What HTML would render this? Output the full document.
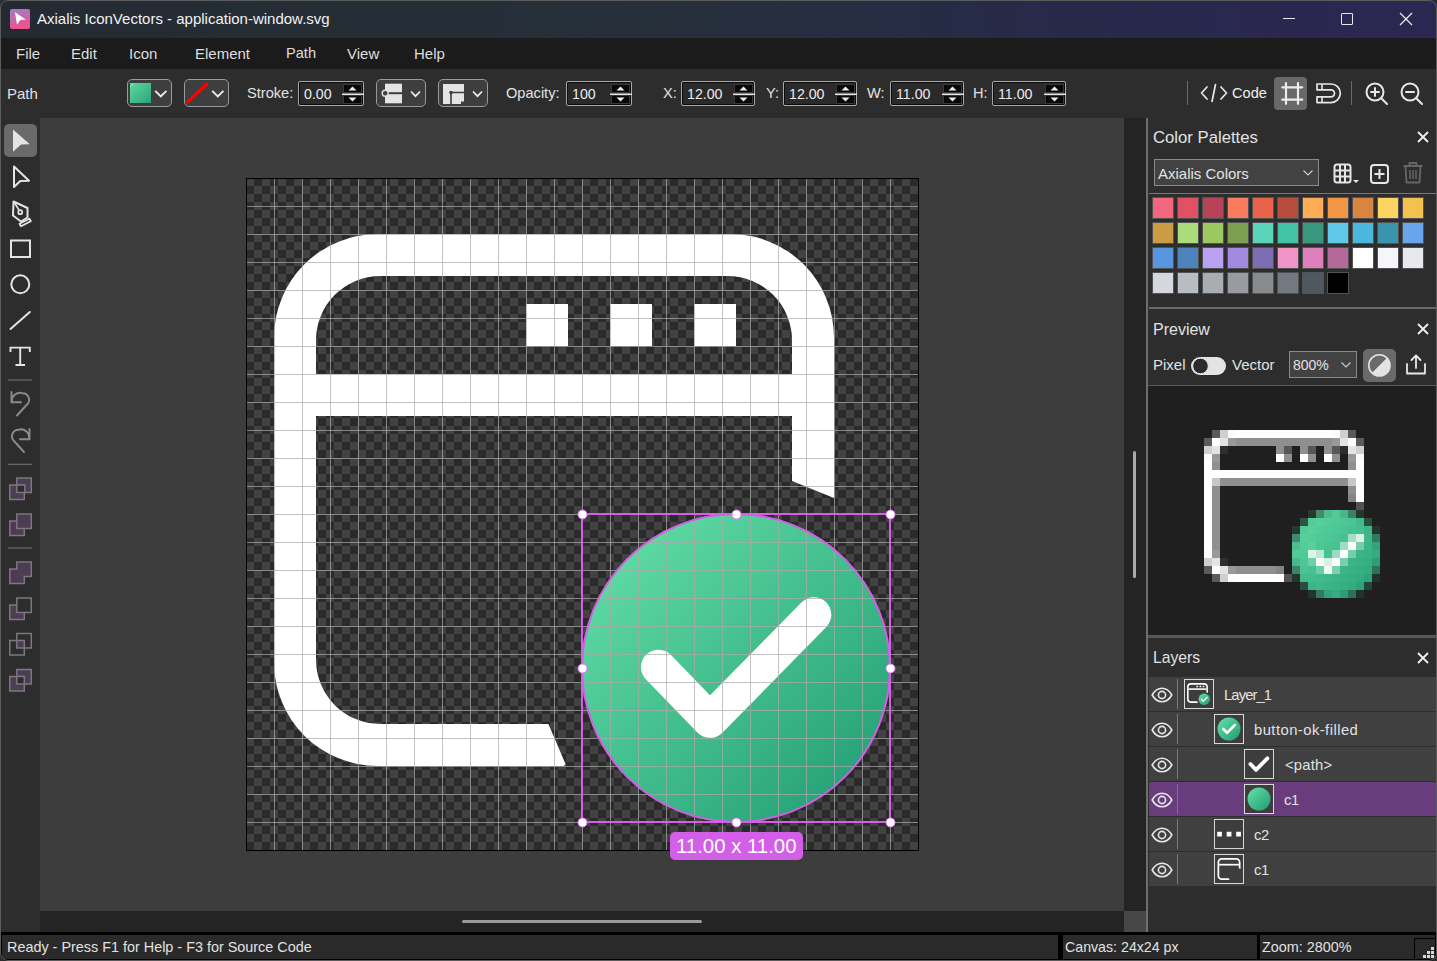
<!DOCTYPE html>
<html><head><meta charset="utf-8">
<style>
*{box-sizing:border-box;margin:0;padding:0}
html,body{width:1437px;height:961px;overflow:hidden;background:#2d2d2d;font-family:"Liberation Sans",sans-serif;color:#e6e6e6;position:relative}
.a{position:absolute}
#frame{position:absolute;left:0;top:0;width:1437px;height:961px;border:1px solid #5c5c5c;border-radius:8px;box-shadow:0 0 0 30px #2e2e2e;z-index:100;pointer-events:none}
#title{left:0;top:0;width:1437px;height:38px;background:linear-gradient(90deg,#242a31 0%,#26303a 45%,#262c44 63%,#28284c 80%,#2b2752 100%)}
#menu{left:0;top:38px;width:1437px;height:31px;background:#1b1b1b}
#menu span{position:absolute;top:7px;font-size:15px;color:#dedede}
#tb{left:0;top:69px;width:1437px;height:49px;background:#2d2d2d}
.lbl{position:absolute;font-size:15px;color:#e2e2e2}
#tools{left:0;top:118px;width:40px;height:814px;background:#2d2d2d}
#cvarea{left:40px;top:118px;width:1084px;height:793px;background:#3d3d3d}
#vsb{left:1124px;top:118px;width:22px;height:793px;background:#242424}
#hsb{left:40px;top:911px;width:1084px;height:21px;background:#242424}
#corner{left:1124px;top:911px;width:22px;height:21px;background:#474747}
#split{left:1146px;top:118px;width:2px;height:814px;background:#6e6e6e}
#panel{left:1148px;top:118px;width:289px;height:814px;background:#2d2d2d}

.btn{position:absolute;border:1px solid #9a9a9a;border-radius:5px;background:#3e3e3e}
.chev{position:absolute}
.inp{position:absolute;height:25px;border:1px solid #a8a8a8;border-radius:2px;background:#2a2a2a;box-shadow:inset 0 0 0 1px #0c0c0c}
.inp span{position:absolute;left:5px;top:4px;font-size:14.2px;color:#ececec}
.spin{position:absolute;right:-1px;top:1px;width:22px;height:21px}
#status{left:0;top:932px;width:1437px;height:29px;background:#000}
</style></head><body>
<div id="title" class="a">
<svg class="a" style="left:10px;top:9px" width="20" height="20" viewBox="0 0 20 20"><defs><linearGradient id="ic" x1="0" y1="0" x2="0.3" y2="1"><stop offset="0" stop-color="#9a82c8"/><stop offset="1" stop-color="#f0508c"/></linearGradient></defs><rect x="0" y="0" width="20" height="20" rx="2" fill="url(#ic)"/><path d="M5 3.2 L15.8 10.6 L10.2 11 L7 15.8 Z" fill="#fff"/></svg>
<span class="lbl" style="left:37px;top:10px;color:#f2f2f2">Axialis IconVectors - application-window.svg</span>
<div class="a" style="left:1283px;top:18px;width:12px;height:1px;background:#e8e8e8"></div>
<div class="a" style="left:1341px;top:13px;width:12px;height:12px;border:1px solid #e8e8e8;border-radius:1px"></div>
<svg class="a" style="left:1399px;top:12px" width="14" height="14" viewBox="0 0 14 14"><path d="M1 1L13 13M13 1L1 13" stroke="#eee" stroke-width="1.2"/></svg>
</div>
<div id="menu" class="a">
<span style="left:16px">File</span><span style="left:71px">Edit</span><span style="left:129px">Icon</span><span style="left:195px">Element</span><span style="left:286px;font-size:14.6px">Path</span><span style="left:347px">View</span><span style="left:414px">Help</span>
</div>
<div id="tb" class="a"><span class="lbl" style="left:7px;top:16px">Path</span><div class="btn" style="left:127px;top:10px;width:45px;height:28px"></div><svg class="a" style="left:130px;top:14px" width="21" height="20" viewBox="0 0 21 20"><defs><linearGradient id="sw" x1="0" y1="0" x2="1" y2="1"><stop offset="0" stop-color="#5fd9a2"/><stop offset="1" stop-color="#2aa27b"/></linearGradient></defs><rect width="21" height="20" fill="url(#sw)"/><path d="M0 4L4 0" stroke="#8fe8c0" stroke-width="0.8"/></svg><svg class="a" style="left:154px;top:20px" width="14" height="10" viewBox="0 0 14 10"><path d="M1.2 1.8L6.8 7.4L12.4 1.8" fill="none" stroke="#ececec" stroke-width="1.9"/></svg><div class="btn" style="left:184px;top:10px;width:45px;height:28px"></div><svg class="a" style="left:186px;top:13px" width="22" height="22" viewBox="0 0 22 22"><path d="M2 19.8L20.6 2.3" stroke="#ff0000" stroke-width="3.4" stroke-linecap="round"/></svg><svg class="a" style="left:211px;top:20px" width="14" height="10" viewBox="0 0 14 10"><path d="M1.2 1.8L6.8 7.4L12.4 1.8" fill="none" stroke="#ececec" stroke-width="1.9"/></svg><span class="lbl" style="left:247px;top:16px;font-size:14.6px">Stroke:</span></div><div class="inp" style="left:298px;top:81px;width:66px"><span>0.00</span><svg class="spin" width="22" height="21" viewBox="0 0 22 21"><rect x="1.5" y="1.5" width="18" height="8" fill="#080808" stroke="#383838"/><rect x="1.5" y="12.5" width="18" height="8" fill="#080808" stroke="#383838"/><rect x="0" y="10.5" width="22" height="1.5" fill="#e6e6e6"/><path d="M6.5 7.5L10.5 3.5L14.5 7.5Z" fill="#eee"/><path d="M6.5 14.5L10.5 18.5L14.5 14.5Z" fill="#eee"/></svg></div><div class="btn" style="left:376px;top:79px;width:50px;height:28px"></div><svg class="a" style="left:381px;top:83px" width="24" height="21" viewBox="0 0 24 21"><rect x="4" y="0.7" width="17" height="19.6" fill="#e4e4e4"/><rect x="4" y="9.2" width="17" height="2" fill="#3e3e3e"/><circle cx="4.2" cy="10.2" r="3" fill="#3e3e3e" stroke="#e4e4e4" stroke-width="1.4"/></svg><svg class="a" style="left:410px;top:90px" width="12" height="9" viewBox="0 0 12 9"><path d="M1 1.5L5.5 6.2L10 1.5" fill="none" stroke="#ececec" stroke-width="1.7"/></svg><div class="btn" style="left:438px;top:79px;width:50px;height:28px"></div><svg class="a" style="left:443px;top:83px" width="22" height="22" viewBox="0 0 22 22"><path d="M0 1H21V21H0Z" fill="#e4e4e4"/><path d="M18 22H22V18.5H18Z" fill="#3e3e3e"/><path d="M8 9.5H21M8 9.5V22" stroke="#3e3e3e" stroke-width="1.6"/><circle cx="8" cy="9.5" r="1.8" fill="#3e3e3e"/></svg><svg class="a" style="left:472px;top:90px" width="12" height="9" viewBox="0 0 12 9"><path d="M1 1.5L5.5 6.2L10 1.5" fill="none" stroke="#ececec" stroke-width="1.7"/></svg><span class="lbl" style="left:506px;top:85px;font-size:14.6px">Opacity:</span><div class="inp" style="left:566px;top:81px;width:66px"><span>100</span><svg class="spin" width="22" height="21" viewBox="0 0 22 21"><rect x="1.5" y="1.5" width="18" height="8" fill="#080808" stroke="#383838"/><rect x="1.5" y="12.5" width="18" height="8" fill="#080808" stroke="#383838"/><rect x="0" y="10.5" width="22" height="1.5" fill="#e6e6e6"/><path d="M6.5 7.5L10.5 3.5L14.5 7.5Z" fill="#eee"/><path d="M6.5 14.5L10.5 18.5L14.5 14.5Z" fill="#eee"/></svg></div><span class="lbl" style="left:663px;top:85px;font-size:14.6px">X:</span><div class="inp" style="left:681px;top:81px;width:74px"><span>12.00</span><svg class="spin" width="22" height="21" viewBox="0 0 22 21"><rect x="1.5" y="1.5" width="18" height="8" fill="#080808" stroke="#383838"/><rect x="1.5" y="12.5" width="18" height="8" fill="#080808" stroke="#383838"/><rect x="0" y="10.5" width="22" height="1.5" fill="#e6e6e6"/><path d="M6.5 7.5L10.5 3.5L14.5 7.5Z" fill="#eee"/><path d="M6.5 14.5L10.5 18.5L14.5 14.5Z" fill="#eee"/></svg></div><span class="lbl" style="left:766px;top:85px;font-size:14.6px">Y:</span><div class="inp" style="left:783px;top:81px;width:74px"><span>12.00</span><svg class="spin" width="22" height="21" viewBox="0 0 22 21"><rect x="1.5" y="1.5" width="18" height="8" fill="#080808" stroke="#383838"/><rect x="1.5" y="12.5" width="18" height="8" fill="#080808" stroke="#383838"/><rect x="0" y="10.5" width="22" height="1.5" fill="#e6e6e6"/><path d="M6.5 7.5L10.5 3.5L14.5 7.5Z" fill="#eee"/><path d="M6.5 14.5L10.5 18.5L14.5 14.5Z" fill="#eee"/></svg></div><span class="lbl" style="left:867px;top:85px;font-size:14.6px">W:</span><div class="inp" style="left:890px;top:81px;width:74px"><span>11.00</span><svg class="spin" width="22" height="21" viewBox="0 0 22 21"><rect x="1.5" y="1.5" width="18" height="8" fill="#080808" stroke="#383838"/><rect x="1.5" y="12.5" width="18" height="8" fill="#080808" stroke="#383838"/><rect x="0" y="10.5" width="22" height="1.5" fill="#e6e6e6"/><path d="M6.5 7.5L10.5 3.5L14.5 7.5Z" fill="#eee"/><path d="M6.5 14.5L10.5 18.5L14.5 14.5Z" fill="#eee"/></svg></div><span class="lbl" style="left:973px;top:85px;font-size:14.6px">H:</span><div class="inp" style="left:992px;top:81px;width:74px"><span>11.00</span><svg class="spin" width="22" height="21" viewBox="0 0 22 21"><rect x="1.5" y="1.5" width="18" height="8" fill="#080808" stroke="#383838"/><rect x="1.5" y="12.5" width="18" height="8" fill="#080808" stroke="#383838"/><rect x="0" y="10.5" width="22" height="1.5" fill="#e6e6e6"/><path d="M6.5 7.5L10.5 3.5L14.5 7.5Z" fill="#eee"/><path d="M6.5 14.5L10.5 18.5L14.5 14.5Z" fill="#eee"/></svg></div><div class="a" style="left:1187px;top:81px;width:1px;height:24px;background:#6a6a6a"></div><svg class="a" style="left:1200px;top:82px" width="28" height="22" viewBox="0 0 28 22"><path d="M7 5L1.5 11L7 17M21 5L26.5 11L21 17M15.5 2.5L12 19.5" fill="none" stroke="#e8e8e8" stroke-width="1.7" stroke-linecap="round" stroke-linejoin="round"/></svg><span class="lbl" style="left:1232px;top:85px;color:#f0f0f0;font-size:14.6px">Code</span><div class="a" style="left:1274px;top:77px;width:33px;height:33px;background:#686868;border-radius:4px"></div><svg class="a" style="left:1280px;top:82px" width="24" height="24" viewBox="0 0 24 24"><path d="M6 1.2V21.8M18 1.2V21.8M2.3 5.3H22.2M2.3 17.7H22.2" fill="none" stroke="#ececec" stroke-width="2.2" stroke-linecap="round"/></svg><svg class="a" style="left:1314px;top:81px" width="28" height="25" viewBox="0 0 28 25"><path d="M3 3H17A9.3 9.3 0 0 1 17 21.6H3V15.8H17A3.5 3.5 0 0 0 17 8.8H3Z" fill="none" stroke="#e8e8e8" stroke-width="1.7" stroke-linejoin="round"/><path d="M8 3V8.8M8 15.8V21.6" stroke="#e8e8e8" stroke-width="1.6"/></svg><div class="a" style="left:1351px;top:81px;width:1px;height:24px;background:#6a6a6a"></div><svg class="a" style="left:1364px;top:81px" width="26" height="26" viewBox="0 0 26 26"><circle cx="11" cy="11" r="8.5" fill="none" stroke="#e8e8e8" stroke-width="2"/><path d="M17.5 17.5L23 23M7 11H15M11 7V15" stroke="#e8e8e8" stroke-width="2" stroke-linecap="round"/></svg><svg class="a" style="left:1399px;top:81px" width="26" height="26" viewBox="0 0 26 26"><circle cx="11" cy="11" r="8.5" fill="none" stroke="#e8e8e8" stroke-width="2"/><path d="M17.5 17.5L23 23M7 11H15" stroke="#e8e8e8" stroke-width="2" stroke-linecap="round"/></svg>
<div id="tools" class="a"></div>
<svg class="a" style="left:0;top:0;z-index:5" width="40" height="961" viewBox="0 0 40 961"><rect x="4" y="124" width="33" height="33" rx="5" fill="#6a6a6a"/><path d="M13 129.5L29.8 144.3L21 144.6L13 151.8Z" fill="#e4e4e4"/><path d="M14 166.5L29 180.8L20.3 181L14 187Z" fill="none" stroke="#e4e4e4" stroke-width="2" stroke-linejoin="round"/><path d="M13.5 201.5L27.5 208L27.5 217.5L21 221.5L13 215.5Z" fill="none" stroke="#e4e4e4" stroke-width="2" stroke-linejoin="round"/><path d="M14 202L19.6 211" stroke="#e4e4e4" stroke-width="1.6"/><circle cx="20.2" cy="212.2" r="2" fill="none" stroke="#e4e4e4" stroke-width="1.7"/><path d="M19.5 223.8L29.5 218.8L30.8 221.2L21 226.2Z" fill="none" stroke="#e4e4e4" stroke-width="1.8" stroke-linejoin="round"/><rect x="11" y="240.5" width="19" height="16.5" fill="none" stroke="#e4e4e4" stroke-width="2"/><circle cx="20.3" cy="284.3" r="9" fill="none" stroke="#e4e4e4" stroke-width="2"/><path d="M10.5 329L29.8 312" stroke="#e4e4e4" stroke-width="2" stroke-linecap="round"/><path d="M10.5 352V347.6H29.8V352M20.2 347.6V365M15.5 365H25" fill="none" stroke="#e4e4e4" stroke-width="1.9"/><rect x="8" y="379.5" width="24" height="1" fill="#777"/><path d="M17 415.5L27 404.5A6.5 6.5 0 0 0 22.5 393.2A8 8 0 0 0 12 401.5M11.5 392V402.3H21" fill="none" stroke="#8c8c8c" stroke-width="1.9" stroke-linecap="round" stroke-linejoin="round"/><path d="M24 452L14 441A6.5 6.5 0 0 1 18.5 429.8A8 8 0 0 1 29 438.5M29.5 429V439.3H20" fill="none" stroke="#8c8c8c" stroke-width="1.9" stroke-linecap="round" stroke-linejoin="round"/><rect x="8" y="463.8" width="24" height="1" fill="#777"/><rect x="8" y="547.5" width="24" height="1" fill="#777"/><rect x="16.8" y="478" width="14.5" height="14.5" fill="#4d3d53" stroke="#7e7680" stroke-width="1.5"/><rect x="9.8" y="485" width="14.5" height="14.5" fill="#4d3d53" stroke="#7e7680" stroke-width="1.5"/><rect x="16.8" y="485" width="8" height="7.5" fill="#2d2d2d" stroke="#7e7680" stroke-width="1.5"/><rect x="9.8" y="521" width="14.5" height="14.5" fill="#4d3d53" stroke="#7e7680" stroke-width="1.5"/><rect x="16.8" y="514" width="14.5" height="14.5" fill="#4d3d53" stroke="#7e7680" stroke-width="1.5"/><path d="M16.8 562H31.3V576.5H24.3V583.5H9.8V569H16.8Z" fill="#4d3d53" stroke="#7e7680" stroke-width="1.5"/><path d="M9.8 605H16.8V612.5H24.3V619.5H9.8Z" fill="#4d3d53"/><rect x="16.8" y="598" width="14.5" height="14.5" fill="none" stroke="#7e7680" stroke-width="1.5"/><path d="M16.8 605H9.8V619.5H24.3V612.5" fill="none" stroke="#7e7680" stroke-width="1.5"/><rect x="16.8" y="640.5" width="7.5" height="7.5" fill="#4d3d53"/><rect x="16.8" y="633.5" width="14.5" height="14.5" fill="none" stroke="#7e7680" stroke-width="1.5"/><rect x="9.8" y="640.5" width="14.5" height="14.5" fill="none" stroke="#7e7680" stroke-width="1.5"/><rect x="16.8" y="669.5" width="14.5" height="14.5" fill="#4d3d53" stroke="#7e7680" stroke-width="1.5"/><rect x="9.8" y="676.5" width="14.5" height="14.5" fill="#4d3d53" stroke="#7e7680" stroke-width="1.5"/><rect x="16.8" y="676.5" width="7.5" height="7.5" fill="#2d2d2d" stroke="#7e7680" stroke-width="1.5"/></svg>
<div id="cvarea" class="a"></div>
<svg class="a" style="left:246px;top:178px" width="673" height="673" viewBox="0 0 673 673">
<defs>
<pattern id="chk" width="16" height="16" patternUnits="userSpaceOnUse"><rect width="16" height="16" fill="#2a2a2a"/><rect width="8" height="8" fill="#424242"/><rect x="8" y="8" width="8" height="8" fill="#424242"/></pattern>
<pattern id="grd" width="28" height="28" patternUnits="userSpaceOnUse"><rect width="28" height="1" fill="rgba(170,170,170,0.72)"/><rect width="1" height="28" fill="rgba(170,170,170,0.72)"/></pattern>
<linearGradient id="gg" x1="0" y1="0" x2="1" y2="1"><stop offset="0" stop-color="#66e2a9"/><stop offset="1" stop-color="#1f9a72"/></linearGradient>
</defs>
<rect width="672" height="672" fill="url(#chk)"/>
<path d="M588 320.04 L588 159.6 A103.6 103.6 0 0 0 484.4 56 L131.6 56 A103.6 103.6 0 0 0 28 159.6 L28 484.4 A103.6 103.6 0 0 0 131.6 588 L315.0 588 Q320.6 588 319.2 585.2 L302.4 546.0 L134.4 546.0 A64.4 64.4 0 0 1 70.0 481.6 L70.0 162.4 A64.4 64.4 0 0 1 134.4 98.0 L481.6 98.0 A64.4 64.4 0 0 1 546.0 162.4 L546.0 302.96 Z" fill="#fff"/><path d="M67.2 196H548.8V238.0H67.2Z" fill="#fff"/><path d="M280 126.0h42.0v42.0h-42.0ZM364 126.0h42.0v42.0h-42.0ZM448 126.0h42.0v42.0h-42.0Z" fill="#fff"/>
<circle cx="490.0" cy="490.0" r="154.0" fill="url(#gg)"/>
<path d="M412.44 489.16L463.96 542.36L567.84 436.8" fill="none" stroke="#fff" stroke-width="35.0" stroke-linecap="round" stroke-linejoin="round"/>
<rect width="672" height="672" fill="url(#grd)"/>
<rect x="0.5" y="0.5" width="672" height="672" fill="none" stroke="#000" stroke-width="1"/>
<circle cx="490.0" cy="490.0" r="154.0" fill="none" stroke="#d45ee6" stroke-width="2"/>
<rect x="336" y="336" width="308" height="308" fill="none" stroke="#d45ee6" stroke-width="2"/>
<circle cx="336.5" cy="336.5" r="4.5" fill="#fff" stroke="#e07ff0" stroke-width="1"/><circle cx="336.5" cy="490.5" r="4.5" fill="#fff" stroke="#e07ff0" stroke-width="1"/><circle cx="336.5" cy="644.5" r="4.5" fill="#fff" stroke="#e07ff0" stroke-width="1"/><circle cx="490.5" cy="336.5" r="4.5" fill="#fff" stroke="#e07ff0" stroke-width="1"/><circle cx="490.5" cy="644.5" r="4.5" fill="#fff" stroke="#e07ff0" stroke-width="1"/><circle cx="644.5" cy="336.5" r="4.5" fill="#fff" stroke="#e07ff0" stroke-width="1"/><circle cx="644.5" cy="490.5" r="4.5" fill="#fff" stroke="#e07ff0" stroke-width="1"/><circle cx="644.5" cy="644.5" r="4.5" fill="#fff" stroke="#e07ff0" stroke-width="1"/>
</svg>
<div class="a" style="left:670px;top:832px;width:133px;height:28px;background:#d35ee8;border-radius:5px"></div><span class="lbl" style="left:676px;top:835px;font-size:20.4px;color:#fff">11.00 x 11.00</span>
<div id="vsb" class="a"></div>
<div id="hsb" class="a"></div>
<div id="corner" class="a"></div>
<div id="split" class="a"></div>
<div id="panel" class="a"></div>
<div id="pv"><span class="lbl" style="left:1153px;top:321px;font-size:16px">Preview</span><svg class="a" style="left:1417px;top:323px" width="12" height="12" viewBox="0 0 12 12"><path d="M1 1L11 11M11 1L1 11" stroke="#f0f0f0" stroke-width="1.8"/></svg><span class="lbl" style="left:1153px;top:356px">Pixel</span><svg class="a" style="left:1190px;top:356px" width="38" height="20" viewBox="0 0 38 20"><rect x="1" y="1" width="35" height="18" rx="9" fill="#e4e4e4"/><circle cx="10.5" cy="10" r="7.8" fill="#2b2b2b" stroke="#e4e4e4" stroke-width="1"/></svg><span class="lbl" style="left:1232px;top:356px">Vector</span><div class="a" style="left:1289px;top:351px;width:68px;height:27px;background:#424242;border:1px solid #8a8a8a"></div><span class="lbl" style="left:1293px;top:357px;font-size:14px">800%</span><svg class="a" style="left:1340px;top:361px" width="12" height="8" viewBox="0 0 12 8"><path d="M1.5 1.5L6 6L10.5 1.5" fill="none" stroke="#cfcfcf" stroke-width="1.1"/></svg><div class="a" style="left:1363px;top:349px;width:33px;height:33px;background:#6a6a6a;border-radius:5px"></div><svg class="a" style="left:1367px;top:353px" width="25" height="25" viewBox="0 0 25 25"><circle cx="12.4" cy="12.4" r="10.6" fill="#6a6a6a" stroke="#e4e4e4" stroke-width="1.6"/><path d="M19.9 4.9A10.6 10.6 0 0 1 4.9 19.9Z" fill="#e4e4e4"/></svg><svg class="a" style="left:1404px;top:352px" width="24" height="24" viewBox="0 0 24 24"><path d="M3 12V21.5H21V12M12 16V3.5M7.5 8L12 3.5L16.5 8" fill="none" stroke="#e6e6e6" stroke-width="1.8" stroke-linejoin="round" stroke-linecap="round"/></svg><div class="a" style="left:1148px;top:385px;width:289px;height:1px;background:#5a5a5a"></div><div class="a" style="left:1148px;top:386px;width:289px;height:249px;background:#1f1f1f"></div><svg class="a" style="left:1196px;top:414px" width="192" height="192" viewBox="0 0 24 24" shape-rendering="crispEdges"><rect x="2" y="2" width="1" height="1" fill="#5a5a5a"/><rect x="3" y="2" width="1" height="1" fill="#cecece"/><rect x="4" y="2" width="1" height="1" fill="#fbfbfb"/><rect x="5" y="2" width="1" height="1" fill="#ffffff"/><rect x="6" y="2" width="1" height="1" fill="#ffffff"/><rect x="7" y="2" width="1" height="1" fill="#ffffff"/><rect x="8" y="2" width="1" height="1" fill="#ffffff"/><rect x="9" y="2" width="1" height="1" fill="#ffffff"/><rect x="10" y="2" width="1" height="1" fill="#ffffff"/><rect x="11" y="2" width="1" height="1" fill="#ffffff"/><rect x="12" y="2" width="1" height="1" fill="#ffffff"/><rect x="13" y="2" width="1" height="1" fill="#ffffff"/><rect x="14" y="2" width="1" height="1" fill="#ffffff"/><rect x="15" y="2" width="1" height="1" fill="#ffffff"/><rect x="16" y="2" width="1" height="1" fill="#ffffff"/><rect x="17" y="2" width="1" height="1" fill="#fbfbfb"/><rect x="18" y="2" width="1" height="1" fill="#cecece"/><rect x="19" y="2" width="1" height="1" fill="#5a5a5a"/><rect x="1" y="3" width="1" height="1" fill="#5b5b5b"/><rect x="2" y="3" width="1" height="1" fill="#fcfcfc"/><rect x="3" y="3" width="1" height="1" fill="#e3e3e3"/><rect x="4" y="3" width="1" height="1" fill="#999999"/><rect x="5" y="3" width="1" height="1" fill="#8f8f8f"/><rect x="6" y="3" width="1" height="1" fill="#8f8f8f"/><rect x="7" y="3" width="1" height="1" fill="#8f8f8f"/><rect x="8" y="3" width="1" height="1" fill="#8f8f8f"/><rect x="9" y="3" width="1" height="1" fill="#8f8f8f"/><rect x="10" y="3" width="1" height="1" fill="#8f8f8f"/><rect x="11" y="3" width="1" height="1" fill="#8f8f8f"/><rect x="12" y="3" width="1" height="1" fill="#8f8f8f"/><rect x="13" y="3" width="1" height="1" fill="#8f8f8f"/><rect x="14" y="3" width="1" height="1" fill="#8f8f8f"/><rect x="15" y="3" width="1" height="1" fill="#8f8f8f"/><rect x="16" y="3" width="1" height="1" fill="#8f8f8f"/><rect x="17" y="3" width="1" height="1" fill="#999999"/><rect x="18" y="3" width="1" height="1" fill="#e3e3e3"/><rect x="19" y="3" width="1" height="1" fill="#fcfcfc"/><rect x="20" y="3" width="1" height="1" fill="#5b5b5b"/><rect x="1" y="4" width="1" height="1" fill="#cfcfcf"/><rect x="2" y="4" width="1" height="1" fill="#e4e4e4"/><rect x="3" y="4" width="1" height="1" fill="#2e2e2e"/><rect x="10" y="4" width="1" height="1" fill="#8f8f8f"/><rect x="11" y="4" width="1" height="1" fill="#575757"/><rect x="13" y="4" width="1" height="1" fill="#8f8f8f"/><rect x="14" y="4" width="1" height="1" fill="#575757"/><rect x="16" y="4" width="1" height="1" fill="#8f8f8f"/><rect x="17" y="4" width="1" height="1" fill="#575757"/><rect x="18" y="4" width="1" height="1" fill="#2e2e2e"/><rect x="19" y="4" width="1" height="1" fill="#e4e4e4"/><rect x="20" y="4" width="1" height="1" fill="#cfcfcf"/><rect x="1" y="5" width="1" height="1" fill="#fbfbfb"/><rect x="2" y="5" width="1" height="1" fill="#999999"/><rect x="10" y="5" width="1" height="1" fill="#ffffff"/><rect x="11" y="5" width="1" height="1" fill="#8f8f8f"/><rect x="13" y="5" width="1" height="1" fill="#ffffff"/><rect x="14" y="5" width="1" height="1" fill="#8f8f8f"/><rect x="16" y="5" width="1" height="1" fill="#ffffff"/><rect x="17" y="5" width="1" height="1" fill="#8f8f8f"/><rect x="19" y="5" width="1" height="1" fill="#999999"/><rect x="20" y="5" width="1" height="1" fill="#fbfbfb"/><rect x="1" y="6" width="1" height="1" fill="#ffffff"/><rect x="2" y="6" width="1" height="1" fill="#8f8f8f"/><rect x="19" y="6" width="1" height="1" fill="#8f8f8f"/><rect x="20" y="6" width="1" height="1" fill="#ffffff"/><rect x="1" y="7" width="1" height="1" fill="#ffffff"/><rect x="2" y="7" width="1" height="1" fill="#ffffff"/><rect x="3" y="7" width="1" height="1" fill="#ffffff"/><rect x="4" y="7" width="1" height="1" fill="#ffffff"/><rect x="5" y="7" width="1" height="1" fill="#ffffff"/><rect x="6" y="7" width="1" height="1" fill="#ffffff"/><rect x="7" y="7" width="1" height="1" fill="#ffffff"/><rect x="8" y="7" width="1" height="1" fill="#ffffff"/><rect x="9" y="7" width="1" height="1" fill="#ffffff"/><rect x="10" y="7" width="1" height="1" fill="#ffffff"/><rect x="11" y="7" width="1" height="1" fill="#ffffff"/><rect x="12" y="7" width="1" height="1" fill="#ffffff"/><rect x="13" y="7" width="1" height="1" fill="#ffffff"/><rect x="14" y="7" width="1" height="1" fill="#ffffff"/><rect x="15" y="7" width="1" height="1" fill="#ffffff"/><rect x="16" y="7" width="1" height="1" fill="#ffffff"/><rect x="17" y="7" width="1" height="1" fill="#ffffff"/><rect x="18" y="7" width="1" height="1" fill="#ffffff"/><rect x="19" y="7" width="1" height="1" fill="#ffffff"/><rect x="20" y="7" width="1" height="1" fill="#ffffff"/><rect x="1" y="8" width="1" height="1" fill="#ffffff"/><rect x="2" y="8" width="1" height="1" fill="#c7c7c7"/><rect x="3" y="8" width="1" height="1" fill="#8f8f8f"/><rect x="4" y="8" width="1" height="1" fill="#8f8f8f"/><rect x="5" y="8" width="1" height="1" fill="#8f8f8f"/><rect x="6" y="8" width="1" height="1" fill="#8f8f8f"/><rect x="7" y="8" width="1" height="1" fill="#8f8f8f"/><rect x="8" y="8" width="1" height="1" fill="#8f8f8f"/><rect x="9" y="8" width="1" height="1" fill="#8f8f8f"/><rect x="10" y="8" width="1" height="1" fill="#8f8f8f"/><rect x="11" y="8" width="1" height="1" fill="#8f8f8f"/><rect x="12" y="8" width="1" height="1" fill="#8f8f8f"/><rect x="13" y="8" width="1" height="1" fill="#8f8f8f"/><rect x="14" y="8" width="1" height="1" fill="#8f8f8f"/><rect x="15" y="8" width="1" height="1" fill="#8f8f8f"/><rect x="16" y="8" width="1" height="1" fill="#8f8f8f"/><rect x="17" y="8" width="1" height="1" fill="#8f8f8f"/><rect x="18" y="8" width="1" height="1" fill="#8f8f8f"/><rect x="19" y="8" width="1" height="1" fill="#c7c7c7"/><rect x="20" y="8" width="1" height="1" fill="#ffffff"/><rect x="1" y="9" width="1" height="1" fill="#ffffff"/><rect x="2" y="9" width="1" height="1" fill="#8f8f8f"/><rect x="19" y="9" width="1" height="1" fill="#8f8f8f"/><rect x="20" y="9" width="1" height="1" fill="#ffffff"/><rect x="1" y="10" width="1" height="1" fill="#ffffff"/><rect x="2" y="10" width="1" height="1" fill="#8f8f8f"/><rect x="19" y="10" width="1" height="1" fill="#868686"/><rect x="20" y="10" width="1" height="1" fill="#ffffff"/><rect x="1" y="11" width="1" height="1" fill="#ffffff"/><rect x="2" y="11" width="1" height="1" fill="#8f8f8f"/><rect x="20" y="11" width="1" height="1" fill="#525252"/><rect x="1" y="12" width="1" height="1" fill="#ffffff"/><rect x="2" y="12" width="1" height="1" fill="#8f8f8f"/><rect x="14" y="12" width="1" height="1" fill="#273830"/><rect x="15" y="12" width="1" height="1" fill="#418c6b"/><rect x="16" y="12" width="1" height="1" fill="#4fbc8e"/><rect x="17" y="12" width="1" height="1" fill="#51ca97"/><rect x="18" y="12" width="1" height="1" fill="#4ab78a"/><rect x="19" y="12" width="1" height="1" fill="#3a8466"/><rect x="20" y="12" width="1" height="1" fill="#25352f"/><rect x="1" y="13" width="1" height="1" fill="#ffffff"/><rect x="2" y="13" width="1" height="1" fill="#8f8f8f"/><rect x="13" y="13" width="1" height="1" fill="#305444"/><rect x="14" y="13" width="1" height="1" fill="#55cb98"/><rect x="15" y="13" width="1" height="1" fill="#55d09b"/><rect x="16" y="13" width="1" height="1" fill="#52cd99"/><rect x="17" y="13" width="1" height="1" fill="#4fca97"/><rect x="18" y="13" width="1" height="1" fill="#4cc795"/><rect x="19" y="13" width="1" height="1" fill="#49c492"/><rect x="20" y="13" width="1" height="1" fill="#45ba8b"/><rect x="21" y="13" width="1" height="1" fill="#2a4d3f"/><rect x="1" y="14" width="1" height="1" fill="#ffffff"/><rect x="2" y="14" width="1" height="1" fill="#8f8f8f"/><rect x="12" y="14" width="1" height="1" fill="#273831"/><rect x="13" y="14" width="1" height="1" fill="#55cb98"/><rect x="14" y="14" width="1" height="1" fill="#55d09b"/><rect x="15" y="14" width="1" height="1" fill="#52cd99"/><rect x="16" y="14" width="1" height="1" fill="#4fca97"/><rect x="17" y="14" width="1" height="1" fill="#4cc795"/><rect x="18" y="14" width="1" height="1" fill="#49c492"/><rect x="19" y="14" width="1" height="1" fill="#46c190"/><rect x="20" y="14" width="1" height="1" fill="#44be8f"/><rect x="21" y="14" width="1" height="1" fill="#3fb487"/><rect x="22" y="14" width="1" height="1" fill="#23342e"/><rect x="1" y="15" width="1" height="1" fill="#ffffff"/><rect x="2" y="15" width="1" height="1" fill="#8f8f8f"/><rect x="12" y="15" width="1" height="1" fill="#418c6c"/><rect x="13" y="15" width="1" height="1" fill="#55d09b"/><rect x="14" y="15" width="1" height="1" fill="#52cd99"/><rect x="15" y="15" width="1" height="1" fill="#4fca97"/><rect x="16" y="15" width="1" height="1" fill="#4cc795"/><rect x="17" y="15" width="1" height="1" fill="#49c492"/><rect x="18" y="15" width="1" height="1" fill="#46c190"/><rect x="19" y="15" width="1" height="1" fill="#a1dfc7"/><rect x="20" y="15" width="1" height="1" fill="#daf1e8"/><rect x="21" y="15" width="1" height="1" fill="#3eb78a"/><rect x="22" y="15" width="1" height="1" fill="#307a5f"/><rect x="1" y="16" width="1" height="1" fill="#ffffff"/><rect x="2" y="16" width="1" height="1" fill="#8f8f8f"/><rect x="12" y="16" width="1" height="1" fill="#4fbd8e"/><rect x="13" y="16" width="1" height="1" fill="#52cd99"/><rect x="14" y="16" width="1" height="1" fill="#5dce9f"/><rect x="15" y="16" width="1" height="1" fill="#4dc795"/><rect x="16" y="16" width="1" height="1" fill="#49c492"/><rect x="17" y="16" width="1" height="1" fill="#46c190"/><rect x="18" y="16" width="1" height="1" fill="#9fdec5"/><rect x="19" y="16" width="1" height="1" fill="#fafdfc"/><rect x="20" y="16" width="1" height="1" fill="#76ccab"/><rect x="21" y="16" width="1" height="1" fill="#3bb487"/><rect x="22" y="16" width="1" height="1" fill="#36a27b"/><rect x="1" y="17" width="1" height="1" fill="#fbfbfb"/><rect x="2" y="17" width="1" height="1" fill="#999999"/><rect x="12" y="17" width="1" height="1" fill="#51cb97"/><rect x="13" y="17" width="1" height="1" fill="#4fca97"/><rect x="14" y="17" width="1" height="1" fill="#ddf5eb"/><rect x="15" y="17" width="1" height="1" fill="#bbe9d6"/><rect x="16" y="17" width="1" height="1" fill="#48c191"/><rect x="17" y="17" width="1" height="1" fill="#9bdcc3"/><rect x="18" y="17" width="1" height="1" fill="#fbfdfc"/><rect x="19" y="17" width="1" height="1" fill="#78cdad"/><rect x="20" y="17" width="1" height="1" fill="#3bb487"/><rect x="21" y="17" width="1" height="1" fill="#38b185"/><rect x="22" y="17" width="1" height="1" fill="#35ac82"/><rect x="1" y="18" width="1" height="1" fill="#cfcfcf"/><rect x="2" y="18" width="1" height="1" fill="#e4e4e4"/><rect x="3" y="18" width="1" height="1" fill="#2e2e2e"/><rect x="12" y="18" width="1" height="1" fill="#4ab88a"/><rect x="13" y="18" width="1" height="1" fill="#4cc795"/><rect x="14" y="18" width="1" height="1" fill="#6ed0a9"/><rect x="15" y="18" width="1" height="1" fill="#f4fbf8"/><rect x="16" y="18" width="1" height="1" fill="#d6f1e6"/><rect x="17" y="18" width="1" height="1" fill="#fbfefd"/><rect x="18" y="18" width="1" height="1" fill="#7bceaf"/><rect x="19" y="18" width="1" height="1" fill="#3bb487"/><rect x="20" y="18" width="1" height="1" fill="#38b185"/><rect x="21" y="18" width="1" height="1" fill="#35ae83"/><rect x="22" y="18" width="1" height="1" fill="#309d77"/><rect x="1" y="19" width="1" height="1" fill="#5b5b5b"/><rect x="2" y="19" width="1" height="1" fill="#fcfcfc"/><rect x="3" y="19" width="1" height="1" fill="#e3e3e3"/><rect x="4" y="19" width="1" height="1" fill="#999999"/><rect x="5" y="19" width="1" height="1" fill="#8f8f8f"/><rect x="6" y="19" width="1" height="1" fill="#8f8f8f"/><rect x="7" y="19" width="1" height="1" fill="#8f8f8f"/><rect x="8" y="19" width="1" height="1" fill="#8f8f8f"/><rect x="9" y="19" width="1" height="1" fill="#8f8f8f"/><rect x="10" y="19" width="1" height="1" fill="#848484"/><rect x="12" y="19" width="1" height="1" fill="#3a8567"/><rect x="13" y="19" width="1" height="1" fill="#49c492"/><rect x="14" y="19" width="1" height="1" fill="#46c190"/><rect x="15" y="19" width="1" height="1" fill="#6ecca8"/><rect x="16" y="19" width="1" height="1" fill="#eef9f4"/><rect x="17" y="19" width="1" height="1" fill="#7ecfb1"/><rect x="18" y="19" width="1" height="1" fill="#3bb487"/><rect x="19" y="19" width="1" height="1" fill="#38b185"/><rect x="20" y="19" width="1" height="1" fill="#35ae83"/><rect x="21" y="19" width="1" height="1" fill="#32ab81"/><rect x="22" y="19" width="1" height="1" fill="#29735a"/><rect x="2" y="20" width="1" height="1" fill="#5b5b5b"/><rect x="3" y="20" width="1" height="1" fill="#cfcfcf"/><rect x="4" y="20" width="1" height="1" fill="#fcfcfc"/><rect x="5" y="20" width="1" height="1" fill="#ffffff"/><rect x="6" y="20" width="1" height="1" fill="#ffffff"/><rect x="7" y="20" width="1" height="1" fill="#ffffff"/><rect x="8" y="20" width="1" height="1" fill="#ffffff"/><rect x="9" y="20" width="1" height="1" fill="#ffffff"/><rect x="10" y="20" width="1" height="1" fill="#ffffff"/><rect x="11" y="20" width="1" height="1" fill="#515151"/><rect x="12" y="20" width="1" height="1" fill="#25362f"/><rect x="13" y="20" width="1" height="1" fill="#45ba8b"/><rect x="14" y="20" width="1" height="1" fill="#43bd8e"/><rect x="15" y="20" width="1" height="1" fill="#41ba8c"/><rect x="16" y="20" width="1" height="1" fill="#3eb78a"/><rect x="17" y="20" width="1" height="1" fill="#3bb487"/><rect x="18" y="20" width="1" height="1" fill="#38b185"/><rect x="19" y="20" width="1" height="1" fill="#35ae83"/><rect x="20" y="20" width="1" height="1" fill="#32ab81"/><rect x="21" y="20" width="1" height="1" fill="#2fa27b"/><rect x="22" y="20" width="1" height="1" fill="#21322c"/><rect x="13" y="21" width="1" height="1" fill="#2a4d3f"/><rect x="14" y="21" width="1" height="1" fill="#3fb487"/><rect x="15" y="21" width="1" height="1" fill="#3eb78a"/><rect x="16" y="21" width="1" height="1" fill="#3bb487"/><rect x="17" y="21" width="1" height="1" fill="#38b185"/><rect x="18" y="21" width="1" height="1" fill="#35ae83"/><rect x="19" y="21" width="1" height="1" fill="#32ab81"/><rect x="20" y="21" width="1" height="1" fill="#2fa27b"/><rect x="21" y="21" width="1" height="1" fill="#23463b"/><rect x="14" y="22" width="1" height="1" fill="#23342e"/><rect x="15" y="22" width="1" height="1" fill="#307a5f"/><rect x="16" y="22" width="1" height="1" fill="#35a27a"/><rect x="17" y="22" width="1" height="1" fill="#35ac82"/><rect x="18" y="22" width="1" height="1" fill="#309c76"/><rect x="19" y="22" width="1" height="1" fill="#29735a"/><rect x="20" y="22" width="1" height="1" fill="#21322c"/></svg><div class="a" style="left:1148px;top:635px;width:289px;height:3px;background:#575757"></div></div><div id="ly"><span class="lbl" style="left:1153px;top:649px;font-size:15.7px">Layers</span><svg class="a" style="left:1417px;top:652px" width="12" height="12" viewBox="0 0 12 12"><path d="M1 1L11 11M11 1L1 11" stroke="#f0f0f0" stroke-width="1.8"/></svg><div class="a" style="left:1149px;top:677px;width:288px;height:34px;background:#404040"></div><svg class="a" style="left:1151px;top:687px" width="22" height="16" viewBox="0 0 22 16"><path d="M1.2 8C4 3 7.5 1.2 11 1.2S18 3 20.8 8C18 13 14.5 14.8 11 14.8S4 13 1.2 8Z" fill="none" stroke="#e6e6e6" stroke-width="1.6"/><circle cx="11" cy="8" r="3.6" fill="none" stroke="#e6e6e6" stroke-width="1.6"/></svg><div class="a" style="left:1177px;top:679px;width:1px;height:30px;background:#7a7a7a"></div><svg class="a" style="left:1184px;top:679px;background:#3d3d3d" width="30" height="30" viewBox="-54 -54 806 806"><path d="M588 320.04 L588 159.6 A103.6 103.6 0 0 0 484.4 56 L131.6 56 A103.6 103.6 0 0 0 28 159.6 L28 484.4 A103.6 103.6 0 0 0 131.6 588 L315.0 588 Q320.6 588 319.2 585.2 L302.4 546.0 L134.4 546.0 A64.4 64.4 0 0 1 70.0 481.6 L70.0 162.4 A64.4 64.4 0 0 1 134.4 98.0 L481.6 98.0 A64.4 64.4 0 0 1 546.0 162.4 L546.0 302.96 Z" fill="#fff"/><path d="M67.2 196H548.8V238.0H67.2Z" fill="#fff"/><path d="M280 126.0h42.0v42.0h-42.0ZM364 126.0h42.0v42.0h-42.0ZM448 126.0h42.0v42.0h-42.0Z" fill="#fff"/><circle cx="490" cy="490" r="154" fill="url(#gg)"/><path d="M412.44 489.16L463.96 542.36L567.84 436.8" fill="none" stroke="#fff" stroke-width="35" stroke-linecap="round" stroke-linejoin="round"/></svg><div class="a" style="left:1184px;top:679px;width:30px;height:30px;border:1px solid #d8d8d8"></div><span class="lbl" style="left:1224px;top:687px;font-size:14.8px;letter-spacing:-0.9px">Layer_1</span><div class="a" style="left:1149px;top:712px;width:288px;height:34px;background:#404040"></div><svg class="a" style="left:1151px;top:722px" width="22" height="16" viewBox="0 0 22 16"><path d="M1.2 8C4 3 7.5 1.2 11 1.2S18 3 20.8 8C18 13 14.5 14.8 11 14.8S4 13 1.2 8Z" fill="none" stroke="#e6e6e6" stroke-width="1.6"/><circle cx="11" cy="8" r="3.6" fill="none" stroke="#e6e6e6" stroke-width="1.6"/></svg><div class="a" style="left:1177px;top:714px;width:1px;height:30px;background:#7a7a7a"></div><svg class="a" style="left:1214px;top:714px;background:#3d3d3d" width="30" height="30" viewBox="289 289 402 402"><circle cx="490" cy="490" r="154" fill="url(#gg)"/><path d="M412.44 489.16L463.96 542.36L567.84 436.8" fill="none" stroke="#fff" stroke-width="35" stroke-linecap="round" stroke-linejoin="round"/></svg><div class="a" style="left:1214px;top:714px;width:30px;height:30px;border:1px solid #d8d8d8"></div><span class="lbl" style="left:1254px;top:722px;font-size:14.8px;letter-spacing:0.45px">button-ok-filled</span><div class="a" style="left:1149px;top:747px;width:288px;height:34px;background:#404040"></div><svg class="a" style="left:1151px;top:757px" width="22" height="16" viewBox="0 0 22 16"><path d="M1.2 8C4 3 7.5 1.2 11 1.2S18 3 20.8 8C18 13 14.5 14.8 11 14.8S4 13 1.2 8Z" fill="none" stroke="#e6e6e6" stroke-width="1.6"/><circle cx="11" cy="8" r="3.6" fill="none" stroke="#e6e6e6" stroke-width="1.6"/></svg><div class="a" style="left:1177px;top:749px;width:1px;height:30px;background:#7a7a7a"></div><svg class="a" style="left:1244px;top:749px;background:#3d3d3d" width="30" height="30" viewBox="354 352 274 274"><path d="M412.44 489.16L463.96 542.36L567.84 436.8" fill="none" stroke="#fff" stroke-width="35" stroke-linecap="round" stroke-linejoin="round"/></svg><div class="a" style="left:1244px;top:749px;width:30px;height:30px;border:1px solid #d8d8d8"></div><span class="lbl" style="left:1285px;top:757px;font-size:14.8px;letter-spacing:0.2px">&lt;path&gt;</span><div class="a" style="left:1149px;top:782px;width:288px;height:34px;background:#693c7d"></div><svg class="a" style="left:1151px;top:792px" width="22" height="16" viewBox="0 0 22 16"><path d="M1.2 8C4 3 7.5 1.2 11 1.2S18 3 20.8 8C18 13 14.5 14.8 11 14.8S4 13 1.2 8Z" fill="none" stroke="#e6e6e6" stroke-width="1.6"/><circle cx="11" cy="8" r="3.6" fill="none" stroke="#e6e6e6" stroke-width="1.6"/></svg><div class="a" style="left:1177px;top:784px;width:1px;height:30px;background:#7a7a7a"></div><svg class="a" style="left:1244px;top:784px;background:#3d3d3d" width="30" height="30" viewBox="289 289 402 402"><circle cx="490" cy="490" r="154" fill="url(#gg)"/></svg><div class="a" style="left:1244px;top:784px;width:30px;height:30px;border:1px solid #d8d8d8"></div><span class="lbl" style="left:1284px;top:792px;font-size:14.8px;letter-spacing:-0.4px">c1</span><div class="a" style="left:1149px;top:817px;width:288px;height:34px;background:#404040"></div><svg class="a" style="left:1151px;top:827px" width="22" height="16" viewBox="0 0 22 16"><path d="M1.2 8C4 3 7.5 1.2 11 1.2S18 3 20.8 8C18 13 14.5 14.8 11 14.8S4 13 1.2 8Z" fill="none" stroke="#e6e6e6" stroke-width="1.6"/><circle cx="11" cy="8" r="3.6" fill="none" stroke="#e6e6e6" stroke-width="1.6"/></svg><div class="a" style="left:1177px;top:819px;width:1px;height:30px;background:#7a7a7a"></div><svg class="a" style="left:1214px;top:819px;background:#3d3d3d" width="30" height="30" viewBox="252 14 265 265"><path d="M280 126.0h42.0v42.0h-42.0ZM364 126.0h42.0v42.0h-42.0ZM448 126.0h42.0v42.0h-42.0Z" fill="#fff"/></svg><div class="a" style="left:1214px;top:819px;width:30px;height:30px;border:1px solid #d8d8d8"></div><span class="lbl" style="left:1254px;top:827px;font-size:14.8px;letter-spacing:-0.4px">c2</span><div class="a" style="left:1149px;top:852px;width:288px;height:34px;background:#404040"></div><svg class="a" style="left:1151px;top:862px" width="22" height="16" viewBox="0 0 22 16"><path d="M1.2 8C4 3 7.5 1.2 11 1.2S18 3 20.8 8C18 13 14.5 14.8 11 14.8S4 13 1.2 8Z" fill="none" stroke="#e6e6e6" stroke-width="1.6"/><circle cx="11" cy="8" r="3.6" fill="none" stroke="#e6e6e6" stroke-width="1.6"/></svg><div class="a" style="left:1177px;top:854px;width:1px;height:30px;background:#7a7a7a"></div><svg class="a" style="left:1214px;top:854px;background:#3d3d3d" width="30" height="30" viewBox="-57 -43 730 730"><path d="M588 320.04 L588 159.6 A103.6 103.6 0 0 0 484.4 56 L131.6 56 A103.6 103.6 0 0 0 28 159.6 L28 484.4 A103.6 103.6 0 0 0 131.6 588 L315.0 588 Q320.6 588 319.2 585.2 L302.4 546.0 L134.4 546.0 A64.4 64.4 0 0 1 70.0 481.6 L70.0 162.4 A64.4 64.4 0 0 1 134.4 98.0 L481.6 98.0 A64.4 64.4 0 0 1 546.0 162.4 L546.0 302.96 Z" fill="#fff"/><path d="M67.2 196H548.8V238.0H67.2Z" fill="#fff"/></svg><div class="a" style="left:1214px;top:854px;width:30px;height:30px;border:1px solid #d8d8d8"></div><span class="lbl" style="left:1254px;top:862px;font-size:14.8px;letter-spacing:-0.4px">c1</span></div><div id="cp"><span class="lbl" style="left:1153px;top:128px;font-size:16.7px">Color Palettes</span><svg class="a" style="left:1417px;top:131px" width="12" height="12" viewBox="0 0 12 12"><path d="M1 1L11 11M11 1L1 11" stroke="#f0f0f0" stroke-width="1.8"/></svg><div class="a" style="left:1154px;top:159px;width:165px;height:27px;background:#424242;border:1px solid #8a8a8a"></div><span class="lbl" style="left:1158px;top:165px">Axialis Colors</span><svg class="a" style="left:1302px;top:169px" width="12" height="8" viewBox="0 0 12 8"><path d="M1.5 1.5L6 6L10.5 1.5" fill="none" stroke="#cfcfcf" stroke-width="1.1"/></svg><svg class="a" style="left:1332px;top:162px" width="30" height="24" viewBox="0 0 30 24"><rect x="2.5" y="2.5" width="16" height="18" rx="2.5" fill="none" stroke="#e6e6e6" stroke-width="2"/><path d="M8 2.5V20.5M13 2.5V20.5M2.5 8.5H18.5M2.5 14.5H18.5" stroke="#e6e6e6" stroke-width="2"/><path d="M21 18H27L24 21Z" fill="#e6e6e6"/></svg><svg class="a" style="left:1368px;top:162px" width="24" height="24" viewBox="0 0 24 24"><rect x="3" y="3" width="17" height="18" rx="3" fill="none" stroke="#e6e6e6" stroke-width="2"/><path d="M11.5 7V17M6.5 12H16.5" stroke="#e6e6e6" stroke-width="2"/></svg><svg class="a" style="left:1401px;top:160px" width="24" height="26" viewBox="0 0 24 26"><path d="M2.5 6H21.5M8.5 5.5V3H15.5V5.5M4.5 6.5L5.5 22.5H18.5L19.5 6.5" fill="none" stroke="#666" stroke-width="1.8" stroke-linejoin="round"/><path d="M9 10V19M12 10V19M15 10V19" stroke="#666" stroke-width="1.5"/></svg><div class="a" style="left:1149px;top:193px;width:288px;height:1px;background:#777"></div><div class="a" style="left:1152px;top:197px;width:21.5px;height:21.5px;background:#f0677f;border:1px solid #525252"></div><div class="a" style="left:1177px;top:197px;width:21.5px;height:21.5px;background:#e05165;border:1px solid #525252"></div><div class="a" style="left:1202px;top:197px;width:21.5px;height:21.5px;background:#b84358;border:1px solid #525252"></div><div class="a" style="left:1227px;top:197px;width:21.5px;height:21.5px;background:#fa7c5e;border:1px solid #525252"></div><div class="a" style="left:1252px;top:197px;width:21.5px;height:21.5px;background:#e9634a;border:1px solid #525252"></div><div class="a" style="left:1277px;top:197px;width:21.5px;height:21.5px;background:#b84c3d;border:1px solid #525252"></div><div class="a" style="left:1302px;top:197px;width:21.5px;height:21.5px;background:#fdac55;border:1px solid #525252"></div><div class="a" style="left:1327px;top:197px;width:21.5px;height:21.5px;background:#f29646;border:1px solid #525252"></div><div class="a" style="left:1352px;top:197px;width:21.5px;height:21.5px;background:#d9843f;border:1px solid #525252"></div><div class="a" style="left:1377px;top:197px;width:21.5px;height:21.5px;background:#fdd461;border:1px solid #525252"></div><div class="a" style="left:1402px;top:197px;width:21.5px;height:21.5px;background:#f4c150;border:1px solid #525252"></div><div class="a" style="left:1152px;top:222px;width:21.5px;height:21.5px;background:#cc9c45;border:1px solid #525252"></div><div class="a" style="left:1177px;top:222px;width:21.5px;height:21.5px;background:#acdb7b;border:1px solid #525252"></div><div class="a" style="left:1202px;top:222px;width:21.5px;height:21.5px;background:#9bc960;border:1px solid #525252"></div><div class="a" style="left:1227px;top:222px;width:21.5px;height:21.5px;background:#7d9f50;border:1px solid #525252"></div><div class="a" style="left:1252px;top:222px;width:21.5px;height:21.5px;background:#5bd5b9;border:1px solid #525252"></div><div class="a" style="left:1277px;top:222px;width:21.5px;height:21.5px;background:#44c2a4;border:1px solid #525252"></div><div class="a" style="left:1302px;top:222px;width:21.5px;height:21.5px;background:#3a977f;border:1px solid #525252"></div><div class="a" style="left:1327px;top:222px;width:21.5px;height:21.5px;background:#5ec9e9;border:1px solid #525252"></div><div class="a" style="left:1352px;top:222px;width:21.5px;height:21.5px;background:#4bb7dd;border:1px solid #525252"></div><div class="a" style="left:1377px;top:222px;width:21.5px;height:21.5px;background:#3a94ae;border:1px solid #525252"></div><div class="a" style="left:1402px;top:222px;width:21.5px;height:21.5px;background:#6aa5ec;border:1px solid #525252"></div><div class="a" style="left:1152px;top:247px;width:21.5px;height:21.5px;background:#5896e0;border:1px solid #525252"></div><div class="a" style="left:1177px;top:247px;width:21.5px;height:21.5px;background:#4f83bb;border:1px solid #525252"></div><div class="a" style="left:1202px;top:247px;width:21.5px;height:21.5px;background:#b9a1ef;border:1px solid #525252"></div><div class="a" style="left:1227px;top:247px;width:21.5px;height:21.5px;background:#a28ae0;border:1px solid #525252"></div><div class="a" style="left:1252px;top:247px;width:21.5px;height:21.5px;background:#7d6db3;border:1px solid #525252"></div><div class="a" style="left:1277px;top:247px;width:21.5px;height:21.5px;background:#f195c9;border:1px solid #525252"></div><div class="a" style="left:1302px;top:247px;width:21.5px;height:21.5px;background:#dd7fba;border:1px solid #525252"></div><div class="a" style="left:1327px;top:247px;width:21.5px;height:21.5px;background:#b36a98;border:1px solid #525252"></div><div class="a" style="left:1352px;top:247px;width:21.5px;height:21.5px;background:#ffffff;border:1px solid #525252"></div><div class="a" style="left:1377px;top:247px;width:21.5px;height:21.5px;background:#f5f6fa;border:1px solid #525252"></div><div class="a" style="left:1402px;top:247px;width:21.5px;height:21.5px;background:#e8e9ed;border:1px solid #525252"></div><div class="a" style="left:1152px;top:272px;width:21.5px;height:21.5px;background:#d4d7de;border:1px solid #525252"></div><div class="a" style="left:1177px;top:272px;width:21.5px;height:21.5px;background:#b8bcc4;border:1px solid #525252"></div><div class="a" style="left:1202px;top:272px;width:21.5px;height:21.5px;background:#a8adb2;border:1px solid #525252"></div><div class="a" style="left:1227px;top:272px;width:21.5px;height:21.5px;background:#989ca2;border:1px solid #525252"></div><div class="a" style="left:1252px;top:272px;width:21.5px;height:21.5px;background:#878b8e;border:1px solid #525252"></div><div class="a" style="left:1277px;top:272px;width:21.5px;height:21.5px;background:#727980;border:1px solid #525252"></div><div class="a" style="left:1302px;top:272px;width:21.5px;height:21.5px;background:#4f5760;border:1px solid #525252"></div><div class="a" style="left:1327px;top:272px;width:21.5px;height:21.5px;background:#000000;border:1px solid #525252"></div><div class="a" style="left:1149px;top:307px;width:288px;height:2px;background:#6a6a6a"></div></div>
<div id="status" class="a"></div>
<div class="a" style="left:2px;top:935px;width:1056px;height:24px;background:#2a2a2a"></div>
<span class="lbl" style="left:7px;top:939px;font-size:14.4px">Ready - Press F1 for Help - F3 for Source Code</span>
<div class="a" style="left:1063px;top:935px;width:194px;height:24px;background:#2a2a2a"></div>
<span class="lbl" style="left:1065px;top:939px;font-size:14.2px">Canvas: 24x24 px</span>
<div class="a" style="left:1260px;top:935px;width:175px;height:24px;background:#2a2a2a"></div>
<span class="lbl" style="left:1262px;top:939px;font-size:14.4px">Zoom: 2800%</span>
<div class="a" style="left:1414px;top:938px;width:21px;height:21px;border-left:1px solid #000;border-top:1px solid #000;background:#2a2a2a"></div>
<svg class="a" style="left:1422px;top:946px" width="14" height="14" viewBox="0 0 14 14"><g fill="#d8d8d8"><rect x="9" y="1" width="3" height="3"/><rect x="5" y="5" width="3" height="3"/><rect x="9" y="5" width="3" height="3"/><rect x="1" y="9" width="3" height="3"/><rect x="5" y="9" width="3" height="3"/><rect x="9" y="9" width="3" height="3"/></g></svg>
<div class="a" style="left:462px;top:920px;width:240px;height:3px;background:#9a9a9a;border-radius:2px"></div>
<div class="a" style="left:1133px;top:451px;width:3px;height:127px;background:#aaa;border-radius:2px"></div>

<div id="frame"></div>
</body></html>
